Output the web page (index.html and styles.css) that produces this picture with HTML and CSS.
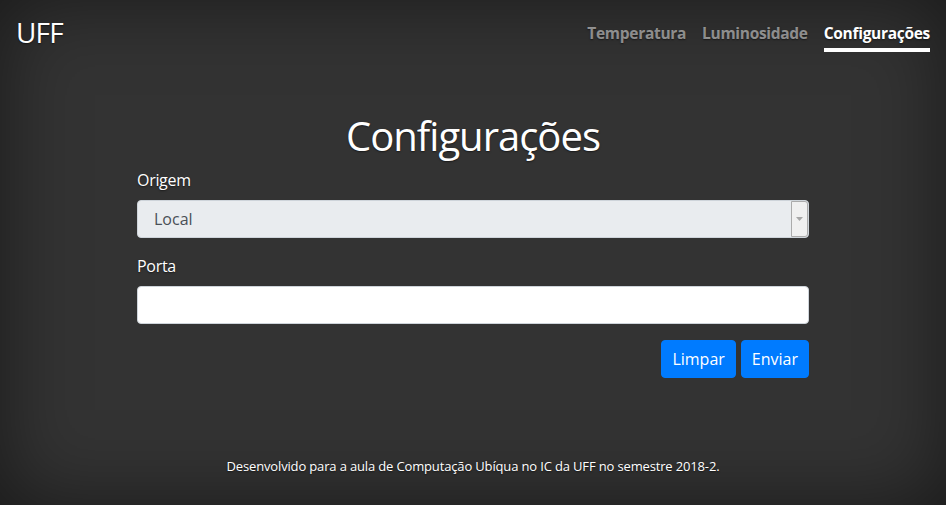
FILE: index.html
```html
<!DOCTYPE html>
<html lang="pt-br">
<head>
<meta charset="utf-8">
<title>UFF - Configurações</title>
<link rel="stylesheet" href="styles.css">
</head>
<body>
<div class="cover">
  <header class="masthead">
    <h3 class="brand">UFF</h3>
    <nav class="nav">
      <a class="nav-link" href="#">Temperatura</a>
      <a class="nav-link" href="#">Luminosidade</a>
      <a class="nav-link active" href="#">Configurações</a>
    </nav>
  </header>
  <main class="inner">
    <h1 class="title">Configurações</h1>
    <form class="form">
      <div class="group">
        <label class="label" for="origem">Origem</label>
        <div class="select-wrap">
          <select class="control select" id="origem" disabled>
            <option>Local</option>
          </select>
          <span class="select-arrow"><svg width="7" height="4" viewBox="0 0 7 4"><path d="M0 0H7L3.5 4Z" fill="#a6a6a6"/></svg></span>
        </div>
      </div>
      <div class="group">
        <label class="label" for="porta">Porta</label>
        <input class="control" id="porta" type="text">
      </div>
      <div class="actions">
        <button type="button" class="btn">Limpar</button>
        <button type="button" class="btn">Enviar</button>
      </div>
    </form>
  </main>
  <footer class="mastfoot">
    <p>Desenvolvido para a aula de Computação Ubíqua no IC da UFF no semestre 2018-2.</p>
  </footer>
</div>
</body>
</html>
```
FILE: styles.css
```css
html, body { height: 100%; }
body {
  margin: 0;
  background: #333;
  color: #fff;
  font-family: "Open Sans", "Noto Sans", sans-serif;
  font-size: 16px;
  line-height: 1.5;
  text-shadow: 0 .05rem .1rem rgba(0,0,0,.5);
  box-shadow: inset 0 0 5rem rgba(0,0,0,.5);
}
.cover {
  box-sizing: border-box;
  height: 100%;
  padding: 16px;
  display: flex;
  flex-direction: column;
}
.masthead {
  display: flex;
  justify-content: space-between;
  align-items: flex-start;
  margin-bottom: auto;
}
.brand {
  margin: 0;
  font-size: 28px;
  font-weight: 400;
  line-height: 1.2;
  letter-spacing: -0.8px;
}
.nav { display: flex; }
.nav-link {
  margin-left: 16px;
  padding: 6px 0 3px;
  font-weight: 700;
  color: rgba(255,255,255,.5);
  text-decoration: none;
  border-bottom: 4px solid transparent;
  font-size: 15.5px;
  letter-spacing: -0.3px;
}
.nav-link.active { color: #fff; border-bottom-color: #fff; }
.inner {
  width: 672px;
  margin: 0 auto;
  padding-bottom: 19px;
}
.title {
  margin: 0 0 8px;
  font-size: 40px;
  font-weight: 400;
  line-height: 1.2;
  text-align: center;
  letter-spacing: -1px;
}
.group { margin-bottom: 16px; }
.label { display: inline-block; margin-bottom: 8px; letter-spacing: -0.3px; }
.control {
  display: block;
  box-sizing: border-box;
  width: 100%;
  height: 38px;
  padding: 6px 12px;
  font: inherit;
  color: #495057;
  background: #fff;
  border: 1px solid #ced4da;
  border-radius: 4px;
}
.select-wrap { position: relative; }
.select {
  appearance: none;
  -webkit-appearance: none;
  padding-left: 16px;
  background: #e9ecef;
  opacity: 1;
  text-shadow: none;
}
.select-arrow {
  position: absolute;
  top: 1px;
  right: 1px;
  width: 15px;
  height: 34px;
  background: #f0f0f0;
  border: 1px solid #ababab;
  border-radius: 0 3px 3px 0;
  display: flex;
  align-items: center;
  justify-content: center;
}
.actions { display: flex; justify-content: flex-end; gap: 5px; margin-top: 1px; }
.btn {
  height: 38px;
  padding: 6px 10px;
  font: inherit;
  color: #fff;
  background: #007bff;
  border: 1px solid #007bff;
  border-radius: 4px;
}
.mastfoot {
  margin-top: auto;
  text-align: center;
  font-size: 13px;
  letter-spacing: -0.15px;
}
.mastfoot p { margin: 0 0 13px; }
```
